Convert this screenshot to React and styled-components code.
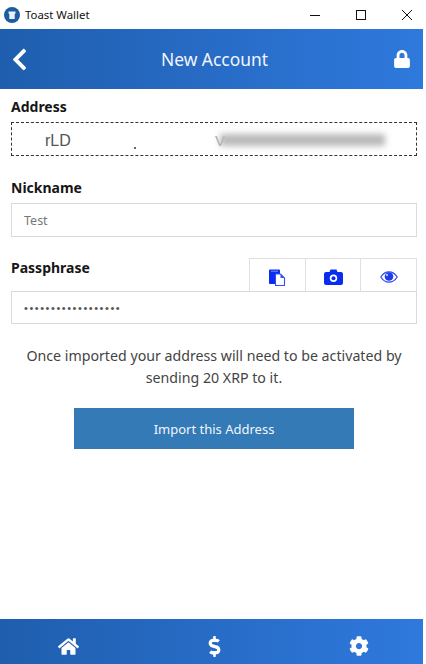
import React from "react";
import styled, { createGlobalStyle } from "styled-components";
import { FaChevronLeft, FaLock, FaHome, FaDollarSign, FaCog } from "react-icons/fa";

const Global = createGlobalStyle`
  html, body { margin: 0; padding: 0; background: #fff; }
  * { box-sizing: border-box; }
  body { font-family: "Noto Sans", "Open Sans", sans-serif; overflow: hidden; }
`;

const Window = styled.div`
  width: 426px;
  height: 664px;
  display: flex;
  flex-direction: column;
  background: #fff;
  overflow: hidden;
`;

const TitleBar = styled.div`
  width: 430px;
  height: 29px;
  flex: none;
  display: flex;
  align-items: center;
  padding-left: 4px;
`;

const AppName = styled.span`
  margin-left: 5px;
  font-size: 11.4px;
  color: #111;
  flex: 1;
`;

const WinButton = styled.div`
  width: 46px;
  height: 29px;
  display: flex;
  align-items: center;
  justify-content: center;
`;

const Body = styled.div`
  width: 423px;
  flex: 1;
  display: flex;
  flex-direction: column;
  min-height: 0;
`;

const Bar = styled.div`
  flex: none;
  height: ${(p) => p.$height}px;
  background: linear-gradient(to right, #1f5eae, #2f79dd);
  color: #fff;
  display: flex;
  align-items: center;
`;

const HeaderBar = styled(Bar)`
  justify-content: space-between;
  padding: 0 12px 0 7px;
`;

const HeaderTitle = styled.div`
  font-size: 17.4px;
  color: #f2f6fc;
  margin-left: 4px;
`;

const Form = styled.div`
  flex: 1;
  padding: 8px 6px 0 11px;
  display: flex;
  flex-direction: column;
`;

const Label = styled.div`
  font-size: 14px;
  font-weight: 700;
  color: #161616;
  line-height: 19px;
`;

const AddressBox = styled.div`
  margin-top: 6px;
  height: 34px;
  border: 1px dashed #333;
  display: flex;
  align-items: center;
  padding: 3px 0 0 33px;
  font-family: "Liberation Sans", sans-serif;
  font-size: 16px;
  color: #555;
  position: relative;
`;

const Dot = styled.span`
  position: absolute;
  left: 122px;
  top: 24px;
  width: 2px;
  height: 2px;
  background: #666;
`;

const BlurV = styled.span`
  position: absolute;
  left: 203px;
  top: 9px;
  font-size: 15px;
  color: #aaa;
`;

const BlurBar = styled.span`
  position: absolute;
  left: 208px;
  top: 11px;
  width: 165px;
  height: 12px;
  background: #b9b9b9;
  filter: blur(3px);
`;

const NickLabel = styled(Label)`
  margin-top: 22px;
`;

const Field = styled.div`
  height: ${(p) => p.$h}px;
  margin-top: ${(p) => p.$mt}px;
  border: 1px solid #d9d9de;
  display: flex;
  align-items: center;
  padding-left: 12px;
  font-size: 12.5px;
  color: #777;
`;

const PassRow = styled.div`
  margin-top: 21px;
  height: 33px;
  display: flex;
  justify-content: space-between;
  align-items: flex-start;
`;

const Tools = styled.div`
  display: flex;
  width: 168px;
  height: 33px;
  border: 1px solid #e0e0e4;
  border-bottom: none;
`;

const Tool = styled.div`
  flex: 1;
  display: flex;
  align-items: center;
  justify-content: center;
  padding-top: 4px;
  & + & { border-left: 1px solid #e0e0e4; }
`;

const Dots = styled.span`
  font-family: "Liberation Sans", sans-serif;
  font-size: 11px;
  letter-spacing: 1.55px;
  color: #555;
  padding-top: 1px;
`;

const Note = styled.p`
  margin: 21px 0 0;
  font-size: 14.2px;
  line-height: 22px;
  text-align: center;
  color: #444;
`;

const ImportButton = styled.button`
  align-self: center;
  margin: 19px 0 0;
  width: 280px;
  height: 41px;
  border: none;
  background: #337ab7;
  color: #f2f6fb;
  font-family: inherit;
  font-size: 13px;
`;

const FooterBar = styled(Bar)`
  justify-content: space-between;
  padding: 9px 54px 0 58px;
`;

function ToastLogo() {
  return (
    <svg width="16" height="16" viewBox="0 0 16 16">
      <circle cx="8" cy="8" r="8" fill="#1d5c9e" />
      <path d="M4.500 4.500h7v2l-.8.6V12H5.300V7.100l-.8-.6z" fill="#e8f0f8" />
    </svg>
  );
}

function PasteIcon() {
  return (
    <svg width="18" height="17" viewBox="0 0 18 17">
      <path d="M1 1.500a1 1 0 0 1 1-1h9a1 1 0 0 1 1 1V15H2a1 1 0 0 1-1-1z" fill="#0a2cf0" />
      <path d="M3 2.200h7" stroke="#7f8ff8" strokeWidth="1" />
      <path d="M7.500 5h5l4 4v7.500h-9z" fill="#fff" stroke="#3350f2" strokeWidth="1.100" />
      <path d="M12.500 5v4h4z" fill="#3350f2" />
    </svg>
  );
}

function CameraIcon() {
  return (
    <svg width="19" height="16" viewBox="0 0 19 16">
      <path d="M2 3h3.500l1-2.500h6l1 2.500H17a2 2 0 0 1 2 2v9a2 2 0 0 1-2 2H2a2 2 0 0 1-2-2V5a2 2 0 0 1 2-2z" fill="#0a2cf0" />
      <circle cx="9.500" cy="9.300" r="3.700" fill="#fff" />
      <circle cx="9.500" cy="9.300" r="2" fill="#0a2cf0" />
    </svg>
  );
}

function EyeIcon() {
  return (
    <svg width="18" height="12" viewBox="0 0 18 12">
      <path d="M.8 6C3 2.500 5.800.8 9 .8S15 2.500 17.200 6C15 9.500 12.200 11.200 9 11.200S3 9.500.8 6z" fill="#fff" stroke="#2b48f0" strokeWidth="1.200" />
      <circle cx="9" cy="5.500" r="4.300" fill="#1c3af0" />
      <circle cx="7" cy="4" r="1.200" fill="#a9b5fa" />
    </svg>
  );
}

export default function App() {
  return (
    <Window>
      <Global />
      <TitleBar>
        <ToastLogo />
        <AppName>Toast Wallet</AppName>
        <WinButton>
          <svg width="10" height="10" viewBox="0 0 10 10"><path d="M0 5.500h10" stroke="#111" /></svg>
        </WinButton>
        <WinButton>
          <svg width="10" height="10" viewBox="0 0 10 10"><rect x=".5" y=".5" width="9" height="9" fill="none" stroke="#111" /></svg>
        </WinButton>
        <WinButton>
          <svg width="10" height="10" viewBox="0 0 10 10"><path d="M0 0l10 10M10 0L0 10" stroke="#111" /></svg>
        </WinButton>
      </TitleBar>
      <Body>
        <HeaderBar $height={60}>
          <FaChevronLeft size={25} />
          <HeaderTitle>New Account</HeaderTitle>
          <FaLock size={18} />
        </HeaderBar>
        <Form>
          <Label>Address</Label>
          <AddressBox>
            rLD
            <Dot />
            <BlurV>V</BlurV>
            <BlurBar />
          </AddressBox>
          <NickLabel>Nickname</NickLabel>
          <Field $h={34} $mt={6}>Test</Field>
          <PassRow>
            <Label>Passphrase</Label>
            <Tools>
              <Tool><PasteIcon /></Tool>
              <Tool><CameraIcon /></Tool>
              <Tool><EyeIcon /></Tool>
            </Tools>
          </PassRow>
          <Field $h={33} $mt={0}><Dots>••••••••••••••••••</Dots></Field>
          <Note>Once imported your address will need to be activated by sending 20 XRP to it.</Note>
          <ImportButton>Import this Address</ImportButton>
        </Form>
        <FooterBar $height={45}>
          <FaHome size={21} />
          <FaDollarSign size={21} />
          <FaCog size={20} />
        </FooterBar>
      </Body>
    </Window>
  );
}
